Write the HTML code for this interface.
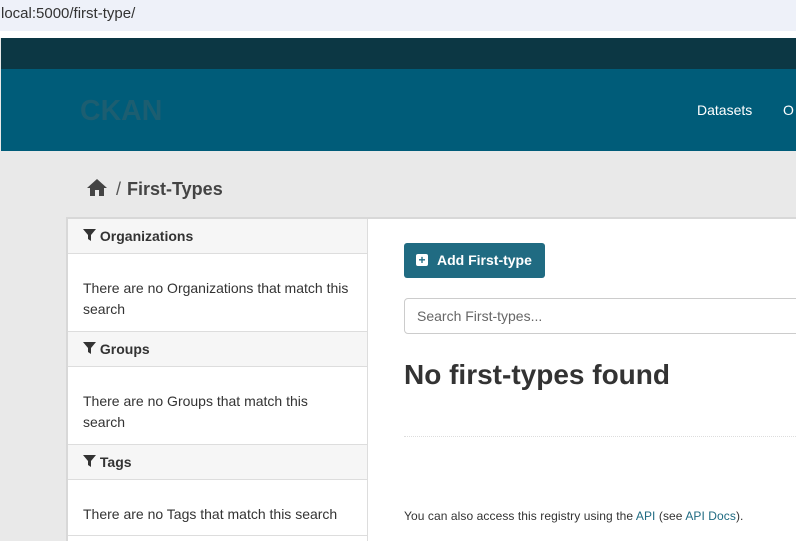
<!DOCTYPE html>
<html style="overflow:hidden;height:541px"><head><style>
body{margin:0;width:796px;height:541px;overflow:hidden;font-family:"Liberation Sans",sans-serif;background:#e9e9e9;position:relative}
.url{position:absolute;left:0;top:0;width:796px;height:31px;background:#eef1f9;font-size:15px;color:#333;line-height:28px;padding-left:1px}
.gap{position:absolute;top:31px;height:7px;width:796px;background:#fff}
.dark{position:absolute;left:1px;top:38px;width:795px;height:31px;background:#0c3744}
.blue{position:absolute;left:1px;top:69px;width:795px;height:82px;background:#005c79}
.logo{position:absolute;left:80px;top:95px;font-size:28.5px;font-weight:bold;color:#1c5e71}
.nav{position:absolute;top:102px;font-size:14px;color:#fff}
.bc{position:absolute;left:87px;top:179px;font-size:18px;color:#444;font-weight:bold}
.card{position:absolute;left:66px;top:217px;width:740px;height:330px;background:#fff;border:2px solid #d8d8d8;border-right:none;border-bottom:none}
.side{position:absolute;left:0;top:0;width:299px;height:330px;border-right:1px solid #ddd}
.h{background:#f6f6f6;border-bottom:1px solid #ddd;border-top:1px solid #ddd;height:36px;font-size:14px;font-weight:bold;color:#333;line-height:34px;padding-left:15px;box-sizing:border-box}
.b{font-size:14px;color:#333;line-height:21px;padding:24px 15px 0;box-sizing:border-box;height:77px}
.btn{position:absolute;left:404px;top:243px;width:141px;height:35px;background:#206b82;border-radius:3px;color:#fff;font-weight:bold;font-size:14px;line-height:35px;box-sizing:border-box;padding-left:33px}
.btn i{position:absolute;left:12px;top:11px;width:12px;height:12px;background:#fff;border-radius:2px;color:#206b82;font-style:normal;font-size:12px;line-height:12px;text-align:center}
.search{position:absolute;left:404px;top:298px;width:400px;height:36px;border:1px solid #ccc;border-radius:4px;box-sizing:border-box;background:#fff;font-size:14px;color:#666;line-height:34px;padding-left:12px}
h1{position:absolute;left:404px;top:359px;margin:0;font-size:28px;color:#333}
.hr{position:absolute;left:404px;top:436px;width:392px;border-top:1px dotted #ddd}
.foot{position:absolute;left:404px;top:509px;font-size:12px;color:#333;letter-spacing:0.08px}
.foot a{color:#206b82;text-decoration:none}
</style></head><body>
<div class="url">local:5000/first-type/</div>
<div class="gap"></div>
<div class="dark"></div>
<div class="blue"></div>
<div class="logo">CKAN</div>
<div class="nav" style="left:697px">Datasets</div>
<div class="nav" style="left:783px">O</div>
<div class="bc"><svg width="20" height="17" viewBox="0 0 20 17" style="vertical-align:-1px"><path d="M10 0 L20 9 L17 9 L17 17 L12 17 L12 11 L8 11 L8 17 L3 17 L3 9 L0 9 Z" fill="#444"/></svg><span style="display:inline-block;width:9px"></span><span style="font-weight:normal;color:#555">/</span><span style="display:inline-block;width:6px"></span>First-Types</div>
<div class="card"><div class="side">
<div class="h" style="border-top:none;height:35px"><svg width="13" height="12" viewBox="0 0 13 12"><path d="M0 0H13L8 6V12L5 10V6Z" fill="#333"/></svg> Organizations</div>
<div class="b">There are no Organizations that match this search</div>
<div class="h"><svg width="13" height="12" viewBox="0 0 13 12"><path d="M0 0H13L8 6V12L5 10V6Z" fill="#333"/></svg> Groups</div>
<div class="b">There are no Groups that match this search</div>
<div class="h"><svg width="13" height="12" viewBox="0 0 13 12"><path d="M0 0H13L8 6V12L5 10V6Z" fill="#333"/></svg> Tags</div>
<div class="b" style="height:56px;border-bottom:1px solid #ddd">There are no Tags that match this search</div>
</div></div>
<div class="btn"><i>+</i>Add First-type</div>
<div class="search">Search First-types...</div>
<h1>No first-types found</h1>
<div class="hr"></div>
<div class="foot">You can also access this registry using the <a>API</a> (see <a>API Docs</a>).</div>
</body></html>
